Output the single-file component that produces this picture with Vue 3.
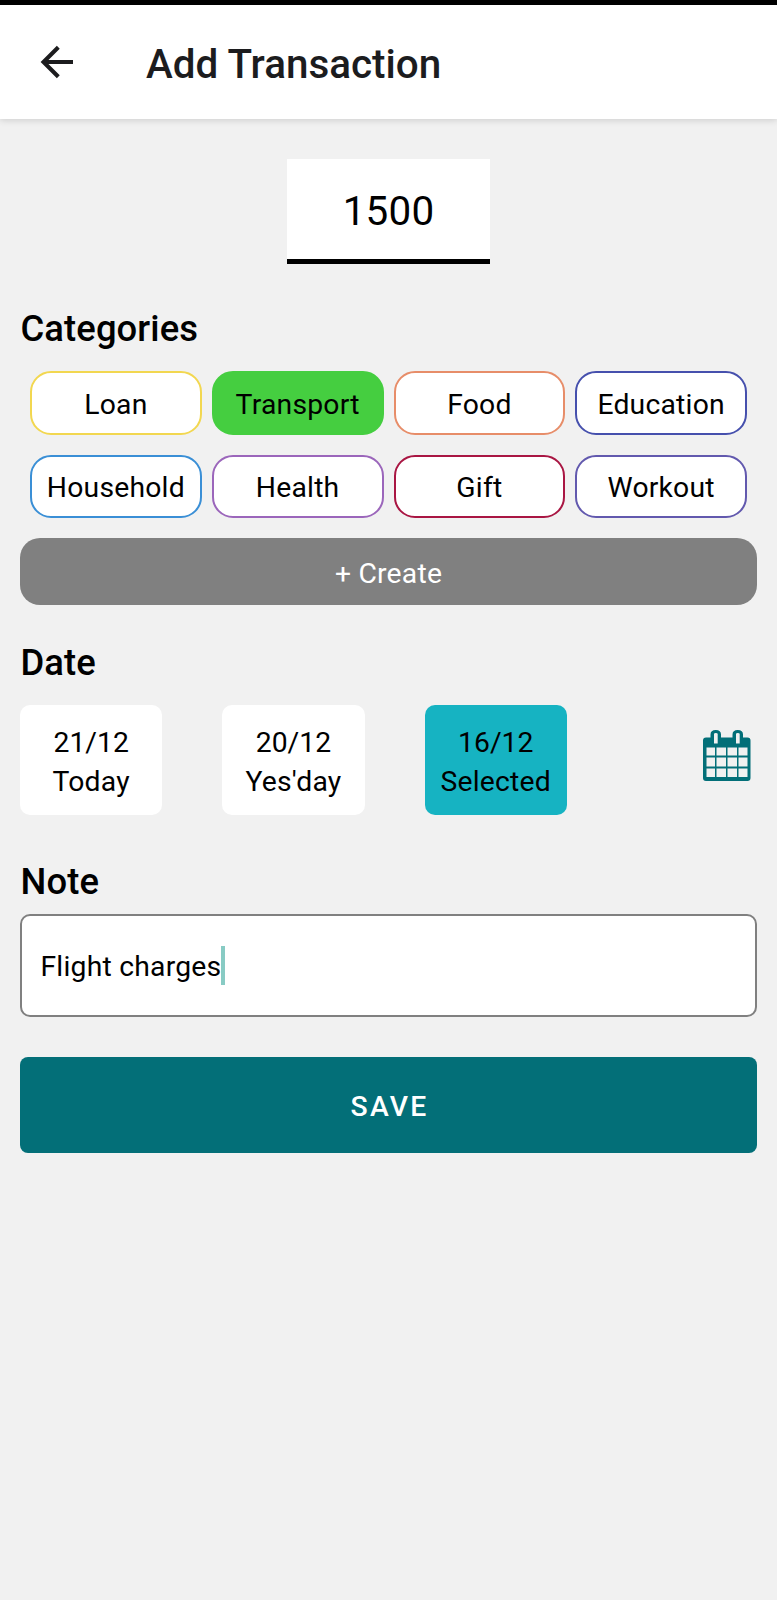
<script setup>
const categories = [
  { name: 'Loan', tone: 'yellow' },
  { name: 'Transport', tone: 'green' },
  { name: 'Food', tone: 'orange' },
  { name: 'Education', tone: 'indigo' },
  { name: 'Household', tone: 'blue' },
  { name: 'Health', tone: 'purple' },
  { name: 'Gift', tone: 'crimson' },
  { name: 'Workout', tone: 'violet' },
]
const dates = [
  { day: '21/12', label: 'Today' },
  { day: '20/12', label: "Yes'day" },
  { day: '16/12', label: 'Selected', active: true },
]
</script>

<template>
  <div class="screen">
    <header class="bar">
      <svg class="back" width="34" height="34" viewBox="0 0 34 34" fill="none" stroke="#1c1c1e">
        <path d="M33 17H4M18.300 2.200L3.500 17L18.300 31.800" stroke-width="4.100" />
      </svg>
      <h1>Add Transaction</h1>
    </header>
    <main>
      <div class="amount">1500</div>
      <h2>Categories</h2>
      <div class="chips">
        <button v-for="c in categories" :key="c.name" class="chip" :class="c.tone">{{ c.name }}</button>
      </div>
      <button class="create">+ Create</button>
      <h2>Date</h2>
      <div class="dates">
        <button v-for="d in dates" :key="d.day" class="date" :class="{ active: d.active }">
          <span class="day">{{ d.day }}</span><span>{{ d.label }}</span>
        </button>
        <svg class="calendar" width="48" height="52" viewBox="0 0 48 52">
          <path fill="#036f78" fill-rule="evenodd" d="M3 8.500H7.500V5.500Q7.500 1 12.800 1Q18 1 18 5.500V8.500H29.500V5.500Q29.500 1 34.800 1Q40 1 40 5.500V8.500H44.500Q47.500 8.500 47.500 11.500V49Q47.500 52 44.500 52H3Q0 52 0 49V11.500Q0 8.500 3 8.500Z
            M11 5Q11 4 12.800 4Q14.700 4 14.700 5V14.500H11Z M33 5Q33 4 34.800 4Q36.700 4 36.700 5V14.500H33Z
            M3.500 18.500H12V26.500H3.500Z M13.500 18.500H23V26.500H13.500Z M24.500 18.500H34V26.500H24.500Z M35.500 18.500H44.500V26.500H35.500Z
            M3.500 28.500H12V37.500H3.500Z M13.500 28.500H23V37.500H13.500Z M24.500 28.500H34V37.500H24.500Z M35.500 28.500H44.500V37.500H35.500Z
            M3.500 39.500H12V48H3.500Z M13.500 39.500H23V48H13.500Z M24.500 39.500H34V48H24.500Z M35.500 39.500H44.500V48H35.500Z" />
        </svg>
      </div>
      <h2 class="note-title">Note</h2>
      <div class="note"><span>Flight charges</span><i class="caret"></i></div>
      <button class="save">SAVE</button>
    </main>
  </div>
</template>

<style>
body { background: #f1f1f1; }
</style>

<style scoped>
.screen {
  box-sizing: border-box;
  min-height: 1600px;
  border-top: 5px solid #000;
  background: #f1f1f1;
  font-family: Roboto, "Liberation Sans", sans-serif;
  font-size: 28.3px;
  letter-spacing: 0.22px;
  color: #000;
}
.bar {
  box-sizing: border-box;
  height: 114px;
  padding-left: 40px;
  display: flex;
  align-items: center;
  gap: 72px;
  background: #fff;
  box-shadow: 0 1px 7px rgba(0, 0, 0, 0.16);
}
.back { flex: none; }
h1 {
  margin: 0;
  padding-top: 6px;
  font-size: 40.4px;
  line-height: 48px;
  font-weight: 500;
  letter-spacing: 0;
  color: #1c1c1e;
}
main {
  display: flex;
  flex-direction: column;
  padding: 40px 20px 0;
}
button {
  box-sizing: border-box;
  border: 0;
  margin: 0;
  padding: 0;
  font: inherit;
  letter-spacing: inherit;
  color: inherit;
}
.amount {
  box-sizing: border-box;
  align-self: center;
  width: 203px;
  height: 105px;
  padding-top: 5px;
  border-bottom: 5px solid #000;
  background: #fff;
  text-align: center;
  font-size: 40.4px;
  line-height: 95px;
}
h2 {
  margin: 43px 0 21px;
  padding-left: 0.5px;
  font-size: 36.4px;
  line-height: 43px;
  font-weight: 500;
  letter-spacing: 0.1px;
}
.chips {
  display: grid;
  grid-template-columns: repeat(4, 1fr);
  gap: 20px 10px;
  padding: 0 10px;
}
.chip {
  height: 63.5px;
  padding-top: 3px;
  border: 2px solid;
  border-radius: 21px;
  background: #fff;
}
.yellow { border-color: #f2d750; }
.green { border-color: #45ce40; background: #45ce40; }
.orange { border-color: #e78d69; }
.indigo { border-color: #4650ad; }
.blue { border-color: #3a8fd6; }
.purple { border-color: #9b66bb; }
.crimson { border-color: #a91643; }
.violet { border-color: #6259ae; }
.create {
  height: 67px;
  margin-top: 20px;
  padding-top: 4px;
  border-radius: 20px;
  background: #808080;
  color: #fff;
}
.create + h2 { margin-top: 36px; }
.dates {
  display: flex;
  align-items: center;
  gap: 60px;
}
.date {
  display: flex;
  flex-direction: column;
  align-items: center;
  width: 142.3px;
  height: 110px;
  padding-top: 18px;
  border-radius: 10px;
  background: #fff;
  line-height: 39px;
}
.day { letter-spacing: 0; }
.date.active { background: #16b3c2; }
.calendar { margin: 0 6px 10px auto; }
.note-title { margin: 45px 0 11px; }
.note {
  box-sizing: border-box;
  display: flex;
  align-items: center;
  height: 103px;
  padding-left: 18.5px;
  border: 2px solid #808080;
  border-radius: 10px;
  background: #fff;
}
.note span { padding-top: 1px; }
.caret {
  width: 4px;
  height: 39px;
  background: #88cbc4;
}
.save {
  height: 96px;
  margin-top: 40px;
  padding: 2px 0 0 2px;
  border-radius: 8px;
  background: #036f78;
  color: #fff;
  font-weight: 500;
  letter-spacing: 2.2px;
}
</style>
